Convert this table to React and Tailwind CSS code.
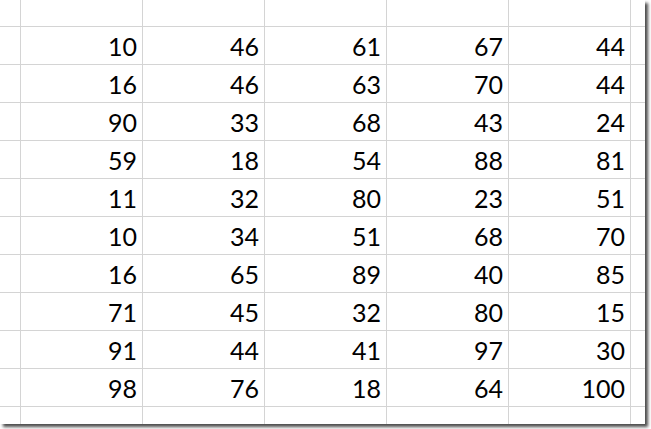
import React from 'react';

const rows = [
  [10, 46, 61, 67, 44],
  [16, 46, 63, 70, 44],
  [90, 33, 68, 43, 24],
  [59, 18, 54, 88, 81],
  [11, 32, 80, 23, 51],
  [10, 34, 51, 68, 70],
  [16, 65, 89, 40, 85],
  [71, 45, 32, 80, 15],
  [91, 44, 41, 97, 30],
  [98, 76, 18, 64, 100],
];

const Row = ({ cells, height }) => (
  <div className={`flex ${height}`}>
    <div className="w-[21px] shrink-0 border-r border-b border-[#d4d4d4]" />
    {[0, 1, 2, 3, 4].map((i) => (
      <div
        key={i}
        className="w-[122px] shrink-0 border-r border-b border-[#d4d4d4] flex items-end justify-end pr-[5px] pb-[5px] text-[25px] leading-none text-black"
      >
        {cells ? cells[i] : ''}
      </div>
    ))}
    <div className="flex-1 border-b border-[#d4d4d4]" />
  </div>
);

const App = () => {
  return (
    <div className="w-[651px] h-[429px] bg-white">
      <div
        className="w-[645px] h-[424px] bg-white overflow-hidden shadow-[3px_3px_3px_rgba(0,0,0,0.7)]"
        style={{ fontFamily: 'Lato, "Open Sans", sans-serif' }}
      >
        <Row height="h-[27px]" />
        {rows.map((r, idx) => (
          <Row key={idx} cells={r} height="h-[38px]" />
        ))}
        <Row height="h-[38px]" />
      </div>
    </div>
  );
};

export default App;
